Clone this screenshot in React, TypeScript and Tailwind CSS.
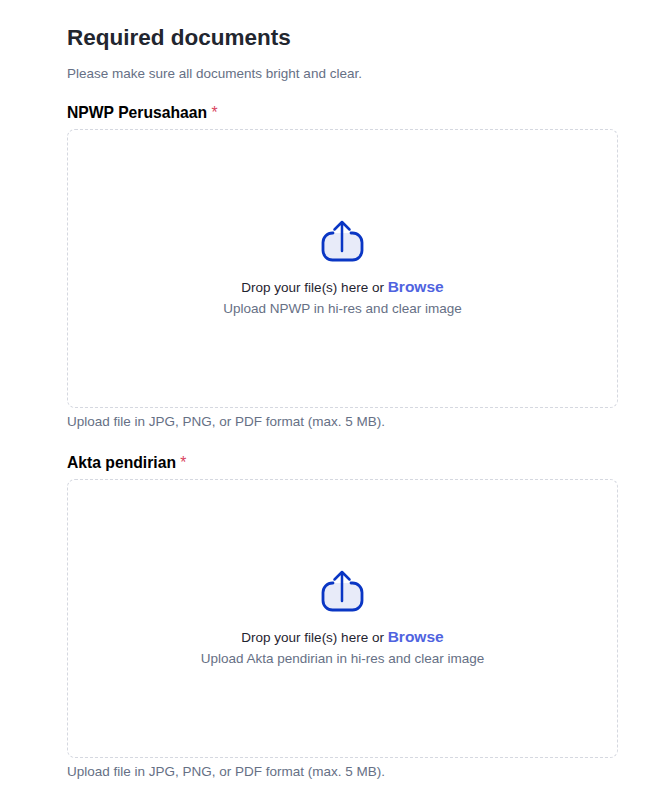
function UploadIcon() {
  return (
    <svg width="42" height="42" viewBox="0 0 42 42" fill="none" className="block -translate-x-[1.5px] overflow-visible">
      <rect x="2.5" y="14" width="39" height="27" rx="9.5" fill="#e8ebf9" />
      <path d="M12.5 14H12A9.5 9.5 0 0 0 2.5 23.5V31.5A9.5 9.5 0 0 0 12 41H32A9.5 9.5 0 0 0 41.5 31.5V23.5A9.5 9.5 0 0 0 32 14H30.5" stroke="#0a36c4" strokeWidth="2.8" strokeLinecap="round" />
      <path d="M21.5 32V3M14 10.5L21.5 3L29 10.5" stroke="#0a36c4" strokeWidth="2.5" strokeLinecap="round" strokeLinejoin="round" />
    </svg>
  );
}

function Field({ label, hint }: { label: string; hint: string }) {
  return (
    <div>
      <div className="h-[22px] text-[15.7px] leading-[22px] font-bold text-black">
        {label} <span className="font-normal text-[#d9455f]">*</span>
      </div>
      <div className="mt-[5px] h-[279px] rounded-lg border border-dashed border-[#d5d8e0] flex flex-col items-center pt-[89px]">
        <UploadIcon />
        <div className="mt-[15px] h-[23px] text-[13.5px] leading-[22px] text-[#1f2430]">
          Drop your file(s) here or <span className="text-[15.5px] font-bold text-[#4f63e0]">Browse</span>
        </div>
        <div className="h-[20px] text-[13.5px] leading-[20px] text-[#667085]">{hint}</div>
      </div>
      <div className="mt-[4px] h-[20px] text-[13.5px] leading-[20px] text-[#667085]">
        Upload file in JPG, PNG, or PDF format (max. 5 MB).
      </div>
    </div>
  );
}

export default function App() {
  return (
    <div className="w-[652px] h-[795px] overflow-hidden bg-white pl-[67px] pr-[34px] pt-[23px] font-['Liberation_Sans',Arial,sans-serif]">
      <h1 className="h-[30px] text-[22.5px] leading-[30px] font-bold text-[#22262f]">Required documents</h1>
      <p className="mt-[11px] h-[20px] text-[13.5px] leading-[20px] text-[#667085]">
        Please make sure all documents bright and clear.
      </p>
      <div className="mt-[18px] flex flex-col gap-[20px]">
        <Field label="NPWP Perusahaan" hint="Upload NPWP in hi-res and clear image" />
        <Field label="Akta pendirian" hint="Upload Akta pendirian in hi-res and clear image" />
      </div>
    </div>
  );
}
